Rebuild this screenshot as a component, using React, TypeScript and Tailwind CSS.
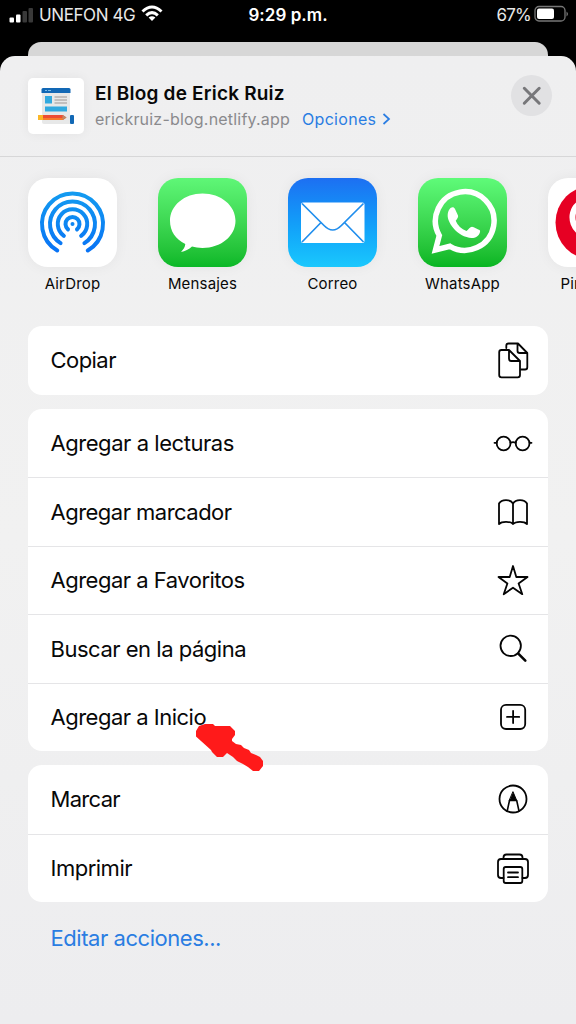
import type { ReactNode } from "react";

const stroke = {
  fill: "none",
  stroke: "#050505",
  strokeWidth: 1.8,
  strokeLinecap: "round" as const,
  strokeLinejoin: "round" as const,
};

function Icon({ children }: { children: ReactNode }) {
  return (
    <svg width="40" height="40" viewBox="0 0 40 40" {...stroke}>
      {children}
    </svg>
  );
}

const CopyIcon = () => (
  <Icon>
    <path d="M13.300 8V5.800Q13.300 3.500 15.600 3.500H25L34.300 13V27.200Q34.300 29.500 32 29.500H28M24.500 3.500V10.700Q24.500 13 26.800 13H34.300" />
    <path d="M8.500 10H16L27 21V35Q27 37.300 24.700 37.300H8.500Q6.200 37.300 6.200 35V12.300Q6.200 10 8.500 10ZM16 10.500V18.700Q16 21 18.300 21H26.500" />
  </Icon>
);
const GlassesIcon = () => (
  <Icon>
    <circle cx="10.600" cy="20.500" r="6.900" />
    <circle cx="29.600" cy="20.500" r="6.900" />
    <path d="M17.500 19.800Q20 18.600 22.700 19.800M1.500 19.800H3.700M36.500 19.800H38.500" />
  </Icon>
);
const BookIcon = () => (
  <Icon>
    <path d="M20 32C17.500 29.300 9 29 6 32V11.500C8.500 7 17.500 7 20 11.500ZM20 32C22.500 29.300 31 29 34 32V11.500C31.500 7 22.500 7 20 11.500Z" />
  </Icon>
);
const StarIcon = () => (
  <Icon>
    <path d="M20 6L23.300 17H34.500L25.600 23.500L29.300 34.200L20 27.700L10.700 34.200L14.400 23.500L5.500 17H16.700Z" />
  </Icon>
);
const SearchIcon = () => (
  <Icon>
    <circle cx="17.700" cy="16.800" r="10.200" />
    <path d="M25.300 24.600L32.300 31.600" strokeWidth="2.600" />
  </Icon>
);
const PlusIcon = () => (
  <Icon>
    <rect x="8" y="7.800" width="24.200" height="24.200" rx="5" />
    <path d="M20.100 13.800V26M14 19.900H26.200" />
  </Icon>
);
const MarkupIcon = () => (
  <Icon>
    <circle cx="20" cy="20" r="13.500" />
    <path d="M14.200 32L16.500 21.500H23.700L26 32" strokeWidth="1.600" />
    <path d="M20.100 13L23.700 21.500H16.500Z" fill="#050505" strokeWidth="1" />
  </Icon>
);
const PrintIcon = () => (
  <Icon>
    <path d="M10.500 11V9.500Q10.500 6.500 13.500 6.500H26.500Q29.500 6.500 29.500 9.500V11M10.500 30H8Q5 30 5 27V14Q5 11 8 11H32Q35 11 35 14V27Q35 30 32 30H29.500" />
    <rect x="10.700" y="19" width="18.600" height="16" rx="2" />
    <path d="M15 24.500H25M15 29.200H25" />
  </Icon>
);

const groups = [
  [{ text: "Copiar", track: "tracking-[-0.55px]", icon: <CopyIcon /> }],
  [
    { text: "Agregar a lecturas", track: "tracking-[-0.45px]", icon: <GlassesIcon /> },
    { text: "Agregar marcador", track: "tracking-[-0.52px]", icon: <BookIcon /> },
    { text: "Agregar a Favoritos", track: "tracking-[-0.5px]", icon: <StarIcon /> },
    { text: "Buscar en la página", track: "tracking-[-0.48px]", icon: <SearchIcon /> },
    { text: "Agregar a Inicio", track: "tracking-[-0.5px]", icon: <PlusIcon /> },
  ],
  [
    { text: "Marcar", track: "tracking-[-0.7px]", icon: <MarkupIcon /> },
    { text: "Imprimir", track: "tracking-[-0.5px]", icon: <PrintIcon /> },
  ],
];

function arc(r: number, halfGap: number) {
  const a = (halfGap * Math.PI) / 180;
  const dx = r * Math.sin(a);
  const y = 46 + r * Math.cos(a);
  return `M${44.5 - dx} ${y}A${r} ${r} 0 1 1 ${44.5 + dx} ${y}`;
}

const AirDrop = () => (
  <svg viewBox="0 0 89 89" className="size-full">
    <defs>
      <linearGradient id="air" gradientUnits="userSpaceOnUse" x1="0" y1="13" x2="0" y2="75">
        <stop stopColor="#139cf0" />
        <stop offset="1" stopColor="#0872f5" />
      </linearGradient>
    </defs>
    <g fill="none" stroke="url(#air)" strokeWidth="4" strokeLinecap="round">
      <path d={arc(30.5, 30)} />
      <path d={arc(22.5, 32)} />
      <path d={arc(14.7, 36)} />
      <path d={arc(7, 40)} />
    </g>
    <circle cx="44.500" cy="46" r="2" fill="#0e87f3" />
  </svg>
);
const Messages = () => (
  <svg viewBox="0 0 89 89" className="size-full">
    <path
      fill="#fff"
      d="M44.500 15.500C63 15.500 77.500 27.500 77.500 42.800S63 70 44.500 70C40.500 70 37 69.500 34 68.600C31 71.500 27 73.500 23 74C25.500 71.500 27 69 27.300 66C17.500 61.500 12 53 12 42.800C12 27.500 26.500 15.500 44.500 15.500Z"
    />
  </svg>
);
const Mail = () => (
  <svg viewBox="0 0 89 89" className="size-full">
    <rect x="13" y="24.500" width="63.500" height="40.500" rx="2" fill="#fff" />
    <g fill="none" stroke="#208eed" strokeWidth="1.700">
      <path d="M14 25.500L36 47.500Q44.700 56.500 53.400 47.500L75.500 25.500" />
      <path d="M33 44.500L14 64M56.500 44.500L75.500 64" />
    </g>
  </svg>
);
const WhatsApp = () => (
  <svg viewBox="0 0 89 89" className="size-full">
    <path
      fill="none"
      stroke="#fff"
      strokeWidth="5.500"
      d="M17.500 72L21.300 57.500A29.300 29.300 0 1 1 32 68.300Z"
    />
    <path
      fill="#fff"
      d="M32.500 30C34.500 28.500 36 29 37 31L40 37.500C40.500 39 39.500 40.500 37.700 42.700C39.500 47.500 43.500 51 48.500 53C50.500 51.500 52 48.700 54 48.700C56 49 59.500 51 61.500 52C63 53 61.500 57 59 58.500C54.500 61.500 48.500 59.500 43.500 57C37.500 53.500 32.500 47.500 30.500 42C29 37.500 29.500 33 32.500 30Z"
    />
  </svg>
);
const Pinterest = () => (
  <svg viewBox="0 0 89 89" className="size-full">
    <circle cx="44.500" cy="44.500" r="37" fill="#e60023" />
    <path
      d="M32 54C20 46 21 22 45 22C63 22 70 34 65 47C60 60 46 60 42 52M46 34L36 73"
      fill="none"
      stroke="#fff"
      strokeWidth="6"
    />
  </svg>
);

const apps = [
  { name: "AirDrop", bg: "bg-white", art: <AirDrop /> },
  { name: "Mensajes", bg: "bg-linear-to-b from-[#5ff777] to-[#09b827]", art: <Messages /> },
  { name: "Correo", bg: "bg-linear-to-b from-[#1d6ff2] to-[#1bc8fd]", art: <Mail /> },
  { name: "WhatsApp", bg: "bg-linear-to-b from-[#5ffb79] to-[#06b521]", art: <WhatsApp /> },
  { name: "Pinterest", bg: "bg-white", art: <Pinterest /> },
];

const BlogIcon = () => (
  <svg viewBox="0 0 56 56" className="size-14 shrink-0 rounded-[5px] bg-white shadow-[0_0_12px_rgba(0,0,0,0.06)]">
    <path d="M14 13H42V46H16Q14 46 14 44Z" fill="#e7e8e8" />
    <path d="M13.500 15V11.500Q13.500 10 15 10H41Q42.500 10 42.500 11.500V15Z" fill="#1268b5" />
    <path d="M17 12.500H19M20 12.500H23" stroke="#7bbce8" />
    <path d="M17 18H24V25.500H17ZM17 28.500H39V33.500H17Z" fill="#31a9df" />
    <path d="M26.500 19H39M26.500 22H39M26.500 25H39" stroke="#9b9694" />
    <path d="M10 37H15V42H10Z" fill="#fbb728" />
    <path d="M15 37H35L38.500 39.500L35 42H15Z" fill="#ee4d32" />
    <path d="M15 40H35V42H15Z" fill="#f77c2a" />
    <path d="M34.500 37L38.500 39.500L34.500 42Z" fill="#bd8b66" />
    <rect x="42" y="37" width="4" height="9" rx="1" fill="#1268b5" />
  </svg>
);

export default function App() {
  return (
    <div className="relative flex h-[1024px] w-[576px] flex-col overflow-hidden bg-black font-['Inter','Liberation_Sans',sans-serif] text-[#080808]">
      <header className="grid h-[42px] shrink-0 grid-cols-3 items-start pt-1 text-white">
        <div className="flex h-[22px] items-center pl-[9px]">
          <svg width="25" height="18" viewBox="0 0 25 18">
            <rect x="0.500" y="11.500" width="4.500" height="5" rx="1" fill="#fff" />
            <rect x="7" y="8.500" width="4.500" height="8" rx="1" fill="#fff" />
            <rect x="13.500" y="5" width="4.500" height="11.500" rx="1" fill="#393939" />
            <rect x="19.500" y="2" width="4.500" height="14.500" rx="1" fill="#393939" />
          </svg>
          <span className="ml-[5px] whitespace-nowrap pt-0.5 text-[17px] tracking-[-0.4px] text-[#e8e8e8]">UNEFON 4G</span>
          <svg width="22" height="17" viewBox="0 0 22 17" className="-mt-1 ml-1.5 shrink-0">
            <g fill="none" stroke="#fff" strokeWidth="3">
              <path d="M1.500 6.500Q11 -2.500 20.500 6.500" />
              <path d="M5.200 10.300Q11 4.900 16.800 10.300" />
            </g>
            <path d="M7.600 12.600Q11 9.800 14.400 12.600L11 16Z" fill="#fff" />
          </svg>
        </div>
        <div className="text-center text-[17px] font-semibold leading-[22px] tracking-[0.05px]">9:29 p.m.</div>
        <div className="flex h-[22px] items-center justify-end pr-[7px]">
          <span className="pt-0.5 text-[17px] tracking-[-0.8px] text-[#e8e8e8]">67%</span>
          <svg width="35" height="18" viewBox="0 0 35 18" className="-mt-0.5 ml-[3px]">
            <rect x="1" y="1.500" width="30" height="14.500" rx="4" fill="none" stroke="#777" strokeWidth="1.300" />
            <rect x="3" y="3.500" width="17" height="10.500" rx="2" fill="#fff" />
            <path d="M32.500 6.500Q35.500 9 32.500 11.500Z" fill="#777" />
          </svg>
        </div>
      </header>

      <div className="mx-7 h-[14px] shrink-0 rounded-t-[13px] bg-[#d7d7d7]" />

      <main className="flex flex-1 flex-col rounded-t-[15px] bg-linear-to-b from-[#efeff0] via-[#f1f1f1] to-[#ededef]">
        <section className="flex h-[101px] shrink-0 border-b border-[#d7d7d8] pl-7 pr-6 pt-[22px]">
          <BlogIcon />
          <div className="ml-[11px] flex flex-1 flex-col pt-[3px]">
            <h1 className="text-[19px] font-semibold leading-[26px] tracking-[0.2px]">El Blog de Erick Ruiz</h1>
            <div className="flex items-center text-[16px] leading-[24px]">
              <span className="tracking-[0.2px] text-[#8a8a8d]">erickruiz-blog.netlify.app</span>
              <span className="ml-3 tracking-[0.3px] text-[#2a7de2]">Opciones</span>
              <svg width="9" height="14" viewBox="0 0 9 14" className="ml-[6px]">
                <path d="M1.500 2L7 7L1.500 12" fill="none" stroke="#2a7de2" strokeWidth="1.700" />
              </svg>
            </div>
          </div>
          <button aria-label="Cerrar" className="-mt-[3px] flex size-[41px] items-center justify-center rounded-full bg-[#e1e1e3]">
            <svg width="20" height="20" viewBox="0 0 20 20">
              <path d="M2.300 2.300L17.200 17.200M17.200 2.300L2.300 17.200" stroke="#77777a" strokeWidth="3" strokeLinecap="round" />
            </svg>
          </button>
        </section>

        <section className="flex h-[169px] shrink-0 gap-[41px] overflow-hidden pl-7 pt-[21px]">
          {apps.map((app) => (
            <div key={app.name} className="flex w-[89px] shrink-0 flex-col items-center">
              <div className={`size-[89px] overflow-hidden rounded-[20px] shadow-[0_0_14px_rgba(0,0,0,0.05)] ${app.bg}`}>{app.art}</div>
              <span className="mt-[7px] text-[15px] leading-5 tracking-[0.18px]">{app.name}</span>
            </div>
          ))}
        </section>

        <div className="flex flex-col gap-[14px] px-7">
          {groups.map((rows, i) => (
            <section key={i} className="overflow-hidden rounded-[14px] bg-white">
              {rows.map((row, j) => (
                <div
                  key={row.text}
                  className={`flex h-[68.500px] items-center justify-between pl-[22.500px] pr-[15px] ${j ? "border-t border-[#e5e5e7]" : ""}`}
                >
                  <span className={`pt-px text-[22px] ${row.track}`}>{row.text}</span>
                  {row.icon}
                </div>
              ))}
            </section>
          ))}
          <span className="pl-[22.500px] pt-[6px] text-[22px] leading-8 tracking-[-0.45px] text-[#2a7de2]">Editar acciones...</span>
        </div>
      </main>

      <svg width="70" height="50" viewBox="0 0 70 50" className="absolute left-[195px] top-[722px]">
        <path
          fill="#ff1a1a"
          d="M1 9L4 4L10 2H18L20 4H35L40 9V13L37 17V19L41 22L46 23L49 26L54 28L56 31L61 33L65 35L68 39V44L64 49H58L53 45L48 42L42 39L38 35L32 31L28 35H22L17 30L16 28L1 14.500Z"
        />
      </svg>
    </div>
  );
}
